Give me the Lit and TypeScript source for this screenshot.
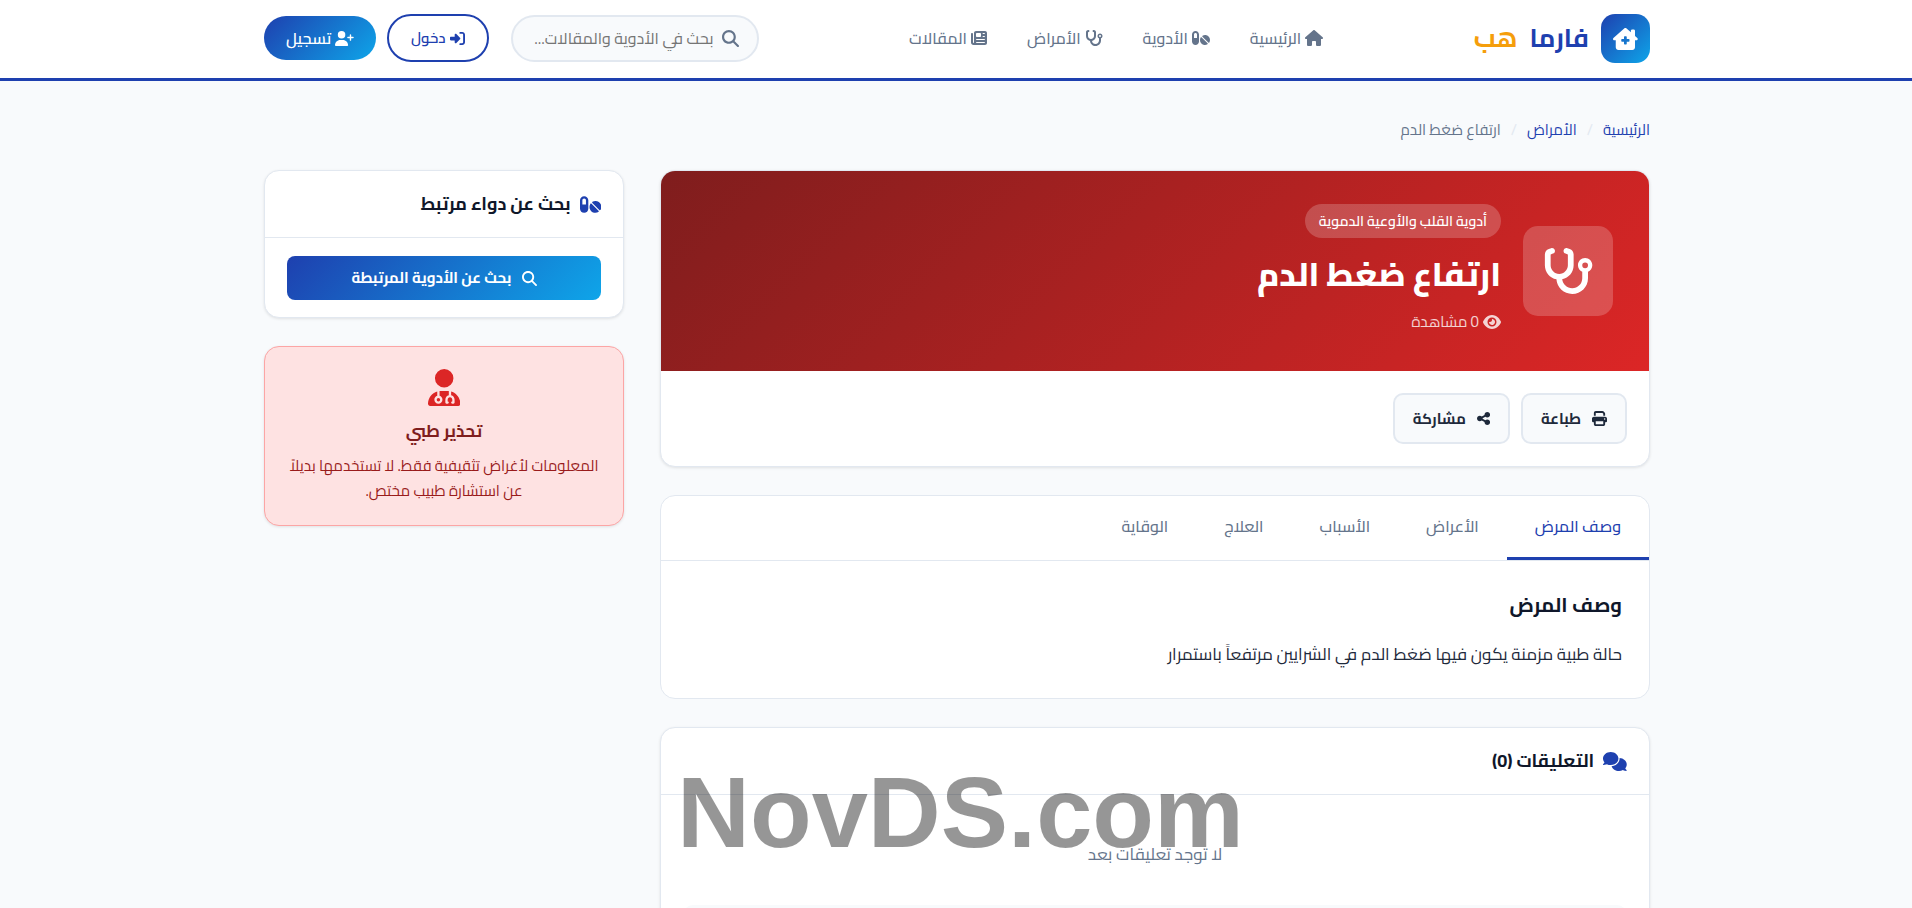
import { LitElement, html, css, svg } from "lit";
import { customElement, property, state } from "lit/decorators.js";
import { classMap } from "lit/directives/class-map.js";

const ICONS: Record<string, [number, string]> = {
  house: [576, "M575.8 255.5c0 18-15 32.1-32 32.1h-32l.7 160.2c0 2.7-.2 5.4-.5 8.1V472c0 22.1-17.9 40-40 40H456c-1.1 0-2.2 0-3.3-.1c-1.4 .1-2.8 .1-4.2 .1H416 392c-22.1 0-40-17.9-40-40V448 384c0-17.7-14.3-32-32-32H256c-17.7 0-32 14.3-32 32v64 24c0 22.1-17.9 40-40 40H160 128.1c-1.5 0-3-.1-4.5-.2c-1.2 .1-2.4 .2-3.6 .2H104c-22.1 0-40-17.9-40-40V360c0-.9 0-1.9 .1-2.8V287.6H32c-18 0-32-14-32-32.1c0-9 3-17 10-24L266.4 8c7-7 15-8 22-8s15 2 21 7L564.8 231.5c8 7 12 15 11 24z"],
  clinic: [576, "M543.8 287.6c17 0 32-14 32-32.1c1-9-3-17-11-24L512 185V64c0-17.7-14.3-32-32-32H448c-17.7 0-32 14.3-32 32v36.7L309.5 7c-6-5-14-7-21-7s-15 1-22 8L10 231.5c-7 7-10 15-10 24c0 18 14 32.1 32 32.1h32V448c0 35.3 28.7 64 64 64H448.5c35.5 0 64.2-28.8 64-64.3l-.7-160.2h32zM256 208c0-8.8 7.2-16 16-16h32c8.8 0 16 7.2 16 16v48h48c8.8 0 16 7.2 16 16v32c0 8.8-7.2 16-16 16H320v48c0 8.8-7.2 16-16 16H272c-8.8 0-16-7.2-16-16V320H208c-8.8 0-16-7.2-16-16V272c0-8.8 7.2-16 16-16h48V208z"],
  pills: [576, "M112 96c-26.5 0-48 21.5-48 48V256h96V144c0-26.5-21.5-48-48-48zM0 144C0 82.1 50.1 32 112 32s112 50.1 112 112V368c0 61.9-50.1 112-112 112S0 429.9 0 368V144zM554.9 399.4c-7.1 12.3-23.7 13.1-33.8 3.1L333.5 214.9c-10-10-9.3-26.7 3.1-33.8C360 167.7 387.1 160 416 160c88.4 0 160 71.6 160 160c0 28.9-7.7 56-21.1 79.4zm-59.5 59.5C472 472.3 444.9 480 416 480c-88.4 0-160-71.6-160-160c0-28.9 7.7-56 21.1-79.4c7.1-12.3 23.7-13.1 33.8-3.1L498.5 425.1c10 10 9.3 26.7-3.1 33.8z"],
  stethoscope: [576, "M142.4 21.9c5.6 16.8-3.5 34.9-20.2 40.5L96 71.1V192c0 53 43 96 96 96s96-43 96-96V71.1l-26.1-8.7c-16.8-5.6-25.8-23.7-20.2-40.5s23.7-25.8 40.5-20.2l26.1 8.7C334.4 19.1 352 43.5 352 71.1V192c0 77.2-54.6 141.6-127.3 156.7C231 404.6 278.4 448 336 448c61.9 0 112-50.1 112-112V265.3c-28.3-12.3-48-40.5-48-73.3c0-44.2 35.8-80 80-80s80 35.8 80 80c0 32.8-19.7 61-48 73.3V336c0 97.2-78.8 176-176 176c-92.9 0-168.9-71.9-175.5-163.1C87.2 334.2 32 269.6 32 192V71.1c0-27.5 17.6-52 43.8-60.7l26.1-8.7c16.8-5.6 34.9 3.5 40.5 20.2zM480 224a32 32 0 1 0 0-64 32 32 0 1 0 0 64z"],
  newspaper: [512, "M96 96c0-35.3 28.7-64 64-64H448c35.3 0 64 28.7 64 64V416c0 35.3-28.7 64-64 64H80c-44.2 0-80-35.8-80-80V128c0-17.7 14.3-32 32-32s32 14.3 32 32V400c0 8.8 7.2 16 16 16s16-7.2 16-16V96zm64 24v80c0 13.3 10.7 24 24 24H296c13.3 0 24-10.7 24-24V120c0-13.3-10.7-24-24-24H184c-13.3 0-24 10.7-24 24zm208-8c0 8.8 7.2 16 16 16h48c8.8 0 16-7.2 16-16s-7.2-16-16-16H384c-8.8 0-16 7.2-16 16zm0 96c0 8.8 7.2 16 16 16h48c8.8 0 16-7.2 16-16s-7.2-16-16-16H384c-8.8 0-16 7.2-16 16zM160 304c0 8.8 7.2 16 16 16H432c8.8 0 16-7.2 16-16s-7.2-16-16-16H176c-8.8 0-16 7.2-16 16zm0 96c0 8.8 7.2 16 16 16H432c8.8 0 16-7.2 16-16s-7.2-16-16-16H176c-8.8 0-16 7.2-16 16z"],
  search: [512, "M416 208c0 45.9-14.9 88.3-40 122.7L502.6 457.4c12.5 12.5 12.5 32.8 0 45.3s-32.8 12.5-45.3 0L330.7 376c-34.4 25.2-76.8 40-122.7 40C93.1 416 0 322.9 0 208S93.1 0 208 0S416 93.1 416 208zM208 352a144 144 0 1 0 0-288 144 144 0 1 0 0 288z"],
  login: [512, "M217.9 105.9L340.7 228.7c7.2 7.2 11.3 17.1 11.3 27.3s-4.1 20.1-11.3 27.3L217.9 406.1c-6.4 6.4-15 9.9-24 9.9c-18.7 0-33.9-15.2-33.9-33.9l0-62.1L32 320c-17.7 0-32-14.3-32-32l0-64c0-17.7 14.3-32 32-32l128 0 0-62.1c0-18.7 15.2-33.9 33.9-33.9c9 0 17.6 3.6 24 9.9zM352 416l64 0c17.7 0 32-14.3 32-32l0-256c0-17.7-14.3-32-32-32l-64 0c-17.7 0-32-14.3-32-32s14.3-32 32-32l64 0c53 0 96 43 96 96l0 256c0 53-43 96-96 96l-64 0c-17.7 0-32-14.3-32-32s14.3-32 32-32z"],
  userPlus: [640, "M96 128a128 128 0 1 1 256 0A128 128 0 1 1 96 128zM0 482.3C0 383.8 79.8 304 178.3 304h91.4C368.2 304 448 383.8 448 482.3c0 16.4-13.3 29.7-29.7 29.7H29.7C13.3 512 0 498.7 0 482.3zM504 312V248H440c-13.3 0-24-10.7-24-24s10.7-24 24-24h64V136c0-13.3 10.7-24 24-24s24 10.7 24 24v64h64c13.3 0 24 10.7 24 24s-10.7 24-24 24H552v64c0 13.3-10.7 24-24 24s-24-10.7-24-24z"],
  eye: [576, "M288 32c-80.8 0-145.5 36.8-192.6 80.6C48.6 156 17.3 208 2.5 243.7c-3.3 7.9-3.3 16.7 0 24.6C17.3 304 48.6 356 95.4 399.4C142.5 443.2 207.2 480 288 480s145.5-36.8 192.6-80.6c46.8-43.5 78.1-95.4 93-131.1c3.3-7.9 3.3-16.7 0-24.6c-14.9-35.7-46.2-87.7-93-131.1C433.5 68.8 368.8 32 288 32zM144 256a144 144 0 1 1 288 0 144 144 0 1 1 -288 0zm144-64c0 35.3-28.7 64-64 64c-7.1 0-13.9-1.2-20.3-3.3c-5.5-1.8-11.9 1.6-11.7 7.4c.3 6.9 1.3 13.8 3.2 20.7c13.7 51.2 66.4 81.6 117.6 67.9s81.6-66.4 67.9-117.6c-11.1-41.5-47.8-69.4-88.6-71.1c-5.8-.2-9.2 6.1-7.4 11.7c2.1 6.4 3.3 13.2 3.3 20.3z"],
  print: [512, "M128 0C92.7 0 64 28.7 64 64v96h64V64H354.7L384 93.3V160h64V93.3c0-17-6.7-33.3-18.7-45.3L400 18.7C388 6.7 371.7 0 354.7 0H128zM384 352v32 64H128V384 368 352H384zm64 32h32c17.7 0 32-14.3 32-32V256c0-35.3-28.7-64-64-64H64c-35.3 0-64 28.7-64 64v96c0 17.7 14.3 32 32 32H64v64c0 35.3 28.7 64 64 64H384c35.3 0 64-28.7 64-64V384zM432 248a24 24 0 1 1 0 48 24 24 0 1 1 0-48z"],
  share: [448, "M352 224c53 0 96-43 96-96s-43-96-96-96s-96 43-96 96c0 4 .2 8 .7 11.9l-94.1 47C145.4 170.2 121.9 160 96 160c-53 0-96 43-96 96s43 96 96 96c25.9 0 49.4-10.2 66.6-26.9l94.1 47c-.5 3.9-.7 7.8-.7 11.9c0 53 43 96 96 96s96-43 96-96s-43-96-96-96c-25.9 0-49.4 10.2-66.6 26.9l-94.1-47c.5-3.9 .7-7.8 .7-11.9s-.2-8-.7-11.9l94.1-47C302.6 213.8 326.1 224 352 224z"],
  comments: [640, "M208 352c114.9 0 208-78.8 208-176S322.9 0 208 0S0 78.8 0 176c0 38.6 14.7 74.3 39.6 103.4c-3.5 9.4-8.7 17.7-14.2 24.7c-4.8 6.2-9.7 11-13.3 14.3c-1.8 1.6-3.3 2.9-4.3 3.7c-.5 .4-.9 .7-1.1 .8l-.2 .2C1 327.2-1.4 334.4 .8 340.9S9.1 352 16 352c21.8 0 43.8-5.6 62.1-12.5c9.2-3.5 17.8-7.4 25.2-11.4C134.1 343.3 169.8 352 208 352zM448 176c0 112.3-99.1 196.9-216.5 207C255.8 457.4 336.4 512 432 512c38.2 0 73.9-8.7 104.7-23.9c7.5 4 16 7.9 25.2 11.4c18.3 6.9 40.3 12.5 62.1 12.5c6.9 0 13.1-4.5 15.2-11.1c2.1-6.6-.2-13.8-5.8-17.9l-.2-.2c-.2-.2-.6-.4-1.1-.8c-1-.8-2.5-2-4.3-3.7c-3.6-3.3-8.5-8.1-13.3-14.3c-5.5-7-10.7-15.4-14.2-24.7c24.9-29 39.6-64.7 39.6-103.4c0-92.8-84.9-168.9-192.6-175.5c.4 5.1 .6 10.3 .6 15.5z"],
  doctor: [448, "M224 256a128 128 0 1 0 0-256 128 128 0 1 0 0 256zm-96 55.2C54 332.9 0 401.3 0 482.3C0 498.7 13.3 512 29.7 512H418.3c16.4 0 29.7-13.3 29.7-29.7c0-81-54-149.4-128-171.1V362c27.6 7.1 48 32.2 48 62v40c0 8.8-7.2 16-16 16H336c-8.8 0-16-7.2-16-16s7.2-16 16-16V424c0-17.7-14.3-32-32-32s-32 14.3-32 32v24c8.8 0 16 7.2 16 16s-7.2 16-16 16H256c-8.8 0-16-7.2-16-16V424c0-29.8 20.4-54.9 48-62V304.9c-6-.6-12.1-.9-18.3-.9H178.3c-6.2 0-12.3 .3-18.3 .9v65.4c23.1 6.9 40 28.3 40 53.7c0 30.9-25.1 56-56 56s-56-25.1-56-56c0-25.4 16.9-46.8 40-53.7V311.2zM144 448a24 24 0 1 0 0-48 24 24 0 1 0 0 48z"],
};

@customElement("ph-icon")
export class PhIcon extends LitElement {
  @property() name = "house";
  static styles = css`
    :host { display: inline-flex; flex: none; }
    svg { display: block; height: 1em; fill: currentColor; }
  `;
  render() {
    const [w, d] = ICONS[this.name];
    return html`<svg viewBox="0 0 ${w} 512" aria-hidden="true">${svg`<path d=${d}></path>`}</svg>`;
  }
}

const NAV = [
  { icon: "house", label: "الرئيسية" },
  { icon: "pills", label: "الأدوية" },
  { icon: "stethoscope", label: "الأمراض" },
  { icon: "newspaper", label: "المقالات" },
];

const TABS = ["وصف المرض", "الأعراض", "الأسباب", "العلاج", "الوقاية"];

@customElement("app-root")
export class AppRoot extends LitElement {
  @state() private tab = 0;

  static styles = css`
    :host {
      display: block;
      min-height: 100vh;
      background: #f8fafc;
      color: #0f172a;
      font-family: Cairo, "Noto Sans Arabic", "Noto Kufi Arabic", "DejaVu Sans", sans-serif;
      font-size: 15px;
      line-height: 26px;
    }
    *, *::before, *::after { box-sizing: border-box; }
    a { color: inherit; text-decoration: none; }
    h1, h2, h3, p { margin: 0; }
    button, input, textarea { font: inherit; }
    button { cursor: pointer; }
    .wrap { max-width: 1450px; margin: 0 auto; padding: 0 31px 0 33px; }

    .top { background: #fff; border-bottom: 3px solid #1e40af; }
    .bar { display: flex; align-items: center; justify-content: space-between; padding-top: 14px; padding-bottom: 15px; }
    .logo { display: flex; align-items: center; gap: 12px; font-size: 26px; font-weight: 700; color: #1e40af; }
    .logo-box {
      display: flex; align-items: center; justify-content: center;
      width: 49px; height: 49px; border-radius: 14px; color: #fff; font-size: 22px;
      background: linear-gradient(135deg, #1e40af, #0ea5e9);
    }
    .word { padding-bottom: 2px; }
    .accent { color: #f59e0b; }
    .nav { display: flex; gap: 40px; padding-bottom: 2px; color: #64748b; font-size: 16px; font-weight: 500; }
    .nav-link { display: flex; align-items: center; gap: 4px; }
    .nav-link ph-icon { font-size: 16px; }
    .actions { display: flex; align-items: center; gap: 11px; padding-bottom: 1px; }
    .search {
      display: flex; align-items: center; gap: 8px; width: 248px; height: 47px;
      padding: 0 18px; margin-left: 11px; border: 2px solid #e2e8f0; border-radius: 24px;
      background: #f8fafc; color: #64748b; font-size: 17px;
    }
    .search input {
      flex: 1; min-width: 0; padding: 0; border: 0; outline: 0; background: none;
      color: #0f172a; font-size: 16px;
    }
    .search input::placeholder { color: #757575; opacity: 1; }
    .pill {
      display: flex; align-items: center; gap: 4px; height: 44px; padding: 0 22px;
      border-radius: 24px; font-size: 15px; font-weight: 600;
    }
    .pill ph-icon { font-size: 15px; }
    .outline { height: 48px; border: 2px solid #1e40af; color: #1e40af; background: #fff; }
    .solid { color: #fff; font-size: 16px; background: linear-gradient(135deg, #1e40af, #0ea5e9); }

    .crumbs { display: flex; gap: 10px; padding: 36px 0 27px; color: #64748b; }
    .crumbs a { color: #1e40af; }
    .slash { color: #e2e8f0; }

    .layout { display: grid; grid-template-columns: minmax(0, 1fr) 360px; gap: 36px; align-items: start; padding-bottom: 28px; }
    .col { display: flex; flex-direction: column; gap: 28px; }
    .card {
      background: #fff; border: 1px solid #e2e8f0; border-radius: 15px; overflow: hidden;
    }
    .raised { box-shadow: 0 1px 3px rgba(0, 0, 0, 0.1); }

    .hero {
      display: flex; align-items: center; gap: 22px; min-height: 200px; padding: 33px 36px; color: #fff;
      background: linear-gradient(135deg, #7f1d1d, #dc2626);
    }
    .hero-icon {
      display: flex; align-items: center; justify-content: center; flex: none;
      width: 90px; height: 90px; border-radius: 15px; background: rgba(255, 255, 255, 0.2); font-size: 46px;
    }
    .hero-text { display: flex; flex-direction: column; align-items: flex-start; padding-bottom: 3px; }
    .badge { padding: 4px 14px; border-radius: 20px; background: rgba(255, 255, 255, 0.2); font-size: 14px; font-weight: 600; }
    .title { margin: 12px 0 11px; font-size: 33px; line-height: 48px; font-weight: 800; }
    .views { display: flex; align-items: center; gap: 4px; opacity: 0.8; }
    .views ph-icon { font-size: 16px; }
    .tools { display: flex; gap: 11px; padding: 22px; }
    .tool {
      display: flex; align-items: center; gap: 11px; height: 51px; padding: 0 18px;
      border: 2px solid #e2e8f0; border-radius: 10px; background: #f8fafc; color: #1e293b; font-weight: 700;
    }
    .tool ph-icon { font-size: 15px; }

    .tabs { display: flex; border-bottom: 1px solid #e2e8f0; }
    .tab {
      height: 64px; padding: 0 28px 2px; border: 0; border-bottom: 3px solid transparent;
      background: none; color: #64748b; font-size: 16px; font-weight: 500;
    }
    .active { color: #1e40af; border-bottom-color: #1e40af; }
    .panel { padding: 29px 27px 30px; }
    .panel-title { margin-bottom: 20px; font-size: 20px; line-height: 30px; font-weight: 700; }
    .panel-text { color: #1e293b; font-size: 17px; line-height: 28px; }

    .head { display: flex; align-items: center; gap: 9px; padding: 20px 22px; border-bottom: 1px solid #e2e8f0; font-size: 18px; font-weight: 700; }
    .head ph-icon { color: #1e40af; font-size: 19px; }
    .body { padding: 18px 22px 17px; }
    .cta {
      display: flex; align-items: center; justify-content: center; gap: 10px; width: 100%; height: 44px;
      border: 0; border-radius: 8px; color: #fff; font-weight: 700;
      background: linear-gradient(135deg, #1e40af, #0ea5e9);
    }
    .warn {
      display: flex; flex-direction: column; align-items: center; padding: 22px;
      background: #fee2e2; border-color: #fca5a5; text-align: center; color: #991b1b;
    }
    .warn ph-icon { color: #dc2626; font-size: 37px; }
    .warn-title { margin: 12px 0 9px; color: #7f1d1d; font-size: 17px; font-weight: 700; }
    .warn-text { font-size: 15px; line-height: 25px; }
    .empty { padding: 46px 0 38px; text-align: center; color: #64748b; font-size: 17px; }
    .form { padding: 0 22px 22px; }
    .form textarea {
      display: block; width: 100%; height: 110px; border: 0; border-radius: 10px; background: #f8fafc; resize: none;
    }
    .mark {
      position: fixed; left: 677px; top: 755px; direction: ltr; pointer-events: none;
      color: rgba(0, 0, 0, 0.41); font: 700 101px/115px "Liberation Sans", Arial, sans-serif;
    }
  `;

  render() {
    return html`
      <div dir="rtl" lang="ar">
        <header class="top">
          <div class="wrap bar">
            <a class="logo" href="#"><span class="logo-box"><ph-icon name="clinic"></ph-icon></span><span class="word">فارما</span><span class="word accent">هب</span></a>
            <nav class="nav">
              ${NAV.map((n) => html`<a class="nav-link" href="#"><ph-icon name=${n.icon}></ph-icon>${n.label}</a>`)}
            </nav>
            <div class="actions">
              <label class="search"><ph-icon name="search"></ph-icon><input type="text" aria-label="بحث" placeholder="بحث في الأدوية والمقالات..." /></label>
              <a class="pill outline" href="#"><ph-icon name="login"></ph-icon>دخول</a>
              <a class="pill solid" href="#"><ph-icon name="userPlus"></ph-icon>تسجيل</a>
            </div>
          </div>
        </header>
        <main class="wrap">
          <nav class="crumbs">
            <a href="#">الرئيسية</a><span class="slash">/</span><a href="#">الأمراض</a><span class="slash">/</span><span>ارتفاع ضغط الدم</span>
          </nav>
          <div class="layout">
            <div class="col">
              <section class="card raised">
                <div class="hero">
                  <span class="hero-icon"><ph-icon name="stethoscope"></ph-icon></span>
                  <div class="hero-text">
                    <span class="badge">أدوية القلب والأوعية الدموية</span>
                    <h1 class="title">ارتفاع ضغط الدم</h1>
                    <span class="views"><ph-icon name="eye"></ph-icon>0 مشاهدة</span>
                  </div>
                </div>
                <div class="tools">
                  <button class="tool"><ph-icon name="print"></ph-icon>طباعة</button>
                  <button class="tool"><ph-icon name="share"></ph-icon>مشاركة</button>
                </div>
              </section>
              <section class="card">
                <div class="tabs" role="tablist">
                  ${TABS.map((t, i) => html`<button role="tab" class=${classMap({ tab: true, active: i === this.tab })} aria-selected=${i === this.tab} @click=${() => (this.tab = i)}>${t}</button>`)}
                </div>
                <div class="panel" role="tabpanel">
                  <h2 class="panel-title">${TABS[this.tab]}</h2>
                  <p class="panel-text">حالة طبية مزمنة يكون فيها ضغط الدم في الشرايين مرتفعاً باستمرار</p>
                </div>
              </section>
              <section class="card raised">
                <h2 class="head"><ph-icon name="comments"></ph-icon>التعليقات (0)</h2>
                <p class="empty">لا توجد تعليقات بعد</p>
                <div class="form"><textarea aria-label="التعليقات"></textarea></div>
              </section>
            </div>
            <aside class="col">
              <section class="card raised">
                <h2 class="head"><ph-icon name="pills"></ph-icon>بحث عن دواء مرتبط</h2>
                <div class="body"><button class="cta"><ph-icon name="search"></ph-icon>بحث عن الأدوية المرتبطة</button></div>
              </section>
              <section class="card raised warn">
                <ph-icon name="doctor"></ph-icon>
                <h3 class="warn-title">تحذير طبي</h3>
                <p class="warn-text">المعلومات لأغراض تثقيفية فقط. لا تستخدمها بديلاً عن استشارة طبيب مختص.</p>
              </section>
            </aside>
          </div>
        </main>
        <div class="mark">NovDS.com</div>
      </div>
    `;
  }
}
